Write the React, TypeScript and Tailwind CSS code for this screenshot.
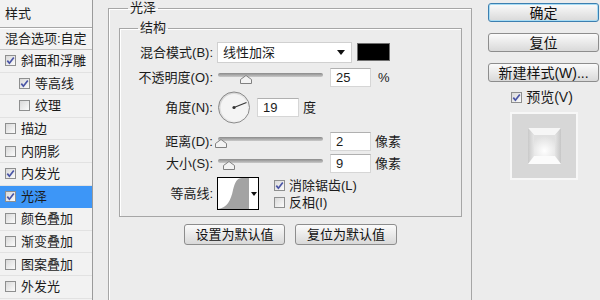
import React from "react";

type Layer = { name: string; checked?: boolean; indent?: boolean; active?: boolean };

const layers: Layer[] = [
  { name: "斜面和浮雕", checked: true },
  { name: "等高线", checked: true, indent: true },
  { name: "纹理", indent: true },
  { name: "描边" },
  { name: "内阴影" },
  { name: "内发光", checked: true },
  { name: "光泽", checked: true, active: true },
  { name: "颜色叠加" },
  { name: "渐变叠加" },
  { name: "图案叠加" },
  { name: "外发光" },
];

function Check({ checked }: { checked?: boolean }) {
  return (
    <span className="flex h-[11px] w-[11px] shrink-0 items-center justify-center border border-[#8e8f8f] bg-linear-to-br from-[#d9d9d9] to-[#fbfbfb]">
      {checked && (
        <svg width="9" height="9" viewBox="0 0 9 9">
          <path d="M1.3 4.6 L3.4 7.2 L7.8 1.4" fill="none" stroke="#4a55a6" strokeWidth="1.7" />
        </svg>
      )}
    </span>
  );
}

function Btn({ label, primary, className }: { label: string; primary?: boolean; className: string }) {
  return (
    <div
      className={
        "flex items-center justify-center rounded-[3px] border bg-linear-to-b from-[#fbfbfb] to-[#d9d9d9] leading-none text-[#111] " +
        (primary ? "border-[#3c7fb0] shadow-[inset_0_0_0_1px_#a8dcf4] " : "border-[#8d8d8d] ") +
        className
      }
    >
      {label}
    </div>
  );
}

function Slider({ thumb }: { thumb: string }) {
  return (
    <div className="relative h-[22px] w-[106px] shrink-0">
      <div className="absolute left-[1px] right-0 top-[7px] h-[4px] rounded-full bg-linear-to-b from-[#8a8a8a] to-[#cacaca]" />
      <svg className={"absolute top-[9px] " + thumb} width="12" height="9" viewBox="0 0 12 9">
        <path d="M6 0.5 L11.5 4.5 L11.5 8.5 L0.5 8.5 L0.5 4.5 Z" fill="#f3f3f3" stroke="#808080" />
      </svg>
    </div>
  );
}

function NumBox({ value, w }: { value: string; w: string }) {
  return (
    <div className={"flex h-[19px] shrink-0 items-center border border-[#d6d6d6] border-t-[#b0b0b0] bg-white pl-[5px] leading-none " + w}>
      {value}
    </div>
  );
}

function Label({ text }: { text: string }) {
  return <div className="w-[93px] shrink-0 text-right leading-none">{text}</div>;
}

export default function App() {
  return (
    <div className="flex h-[300px] w-[600px] overflow-hidden bg-[#ececec] font-['Liberation_Sans','Noto_Sans_CJK_SC',sans-serif] text-[13px] text-[#1b1b1b]">
      {/* style list */}
      <div className="flex w-[93px] shrink-0 flex-col border-r border-[#9a9a9a] bg-[#f2f2f2]">
        <div className="flex h-[28px] shrink-0 items-center border-b border-[#a8a8a8] pl-[5px] leading-none shadow-[0_1px_0_#fff]">
          样式
        </div>
        <div className="flex h-[22px] shrink-0 items-center border-b border-[#c4c4c4] pl-[5px] leading-none">
          混合选项:自定
        </div>
        {layers.map((l) => (
          <div
            key={l.name}
            className={
              "flex h-[22.6px] shrink-0 items-center gap-[5px] border-b leading-none " +
              (l.indent ? "pl-[19px] " : "pl-[5px] ") +
              (l.active ? "border-[#3d96f7] bg-[#3d96f7]" : "border-[#e2e2e2]")
            }
          >
            <Check checked={l.checked} />
            <span>{l.name}</span>
          </div>
        ))}
      </div>

      {/* main group */}
      <fieldset className="ml-[15px] h-[330px] w-[364px] shrink-0 border border-[#a6a6a6] pl-[10px] pr-[9px] pt-[4px] shadow-[inset_1px_1px_0_#fff]">
        <legend className="ml-[9px] px-[2px] leading-[16px]">光泽</legend>

        <fieldset className="w-full border border-[#a6a6a6] pb-[6px] shadow-[inset_1px_1px_0_#fff]">
          <legend className="ml-[18px] px-[2px] leading-[16px]">结构</legend>

          {/* blend mode */}
          <div className="mt-[5px] flex h-[22px] items-center">
            <Label text="混合模式(B):" />
            <div className="ml-[4px] flex h-[21px] w-[135px] items-center justify-between border border-[#d0d0d0] bg-white pl-[5px] pr-[6px] leading-none">
              <span>线性加深</span>
              <svg width="8" height="5" viewBox="0 0 8 5">
                <path d="M0 0 L8 0 L4 5 Z" fill="#111" />
              </svg>
            </div>
            <div className="ml-[5px] h-[18px] w-[33px] border border-[#6f6f6f] bg-black" />
          </div>

          {/* opacity */}
          <div className="mt-[3px] flex h-[22px] items-center">
            <Label text="不透明度(O):" />
            <div className="ml-[4px] flex items-center">
              <Slider thumb="left-[23px]" />
              <div className="ml-[7px]">
                <NumBox value="25" w="w-[41px]" />
              </div>
              <span className="ml-[7px] leading-none">%</span>
            </div>
          </div>

          {/* angle */}
          <div className="mt-[3px] flex h-[32px] items-center">
            <Label text="角度(N):" />
            <svg className="ml-[4px] shrink-0" width="34" height="33" viewBox="0 0 34 33">
              <defs>
                <linearGradient id="dial" x1="0" y1="0" x2="1" y2="1">
                  <stop offset="0" stopColor="#cdcdcd" />
                  <stop offset="1" stopColor="#fbfbfb" />
                </linearGradient>
              </defs>
              <circle cx="17" cy="16.5" r="15.5" fill="url(#dial)" stroke="#8a8a8a" />
              <circle cx="17" cy="16.5" r="13.5" fill="#f4f4f4" />
              <line x1="17" y1="16.5" x2="29.5" y2="11.5" stroke="#3a3a3a" strokeWidth="1.3" />
              <circle cx="17" cy="16.5" r="1.6" fill="#333" />
            </svg>
            <div className="ml-[6px]">
              <NumBox value="19" w="w-[42px]" />
            </div>
            <span className="ml-[4px] leading-none">度</span>
          </div>

          {/* distance */}
          <div className="mt-[7px] flex h-[22px] items-center">
            <Label text="距离(D):" />
            <div className="ml-[4px] flex items-center">
              <Slider thumb="-left-[2px]" />
              <div className="ml-[7px]">
                <NumBox value="2" w="w-[41px]" />
              </div>
              <span className="ml-[4px] leading-none">像素</span>
            </div>
          </div>

          {/* size */}
          <div className="flex h-[22px] items-center">
            <Label text="大小(S):" />
            <div className="ml-[4px] flex items-center">
              <Slider thumb="left-[6px]" />
              <div className="ml-[7px]">
                <NumBox value="9" w="w-[41px]" />
              </div>
              <span className="ml-[4px] leading-none">像素</span>
            </div>
          </div>

          {/* contour */}
          <div className="mt-[3px] flex h-[33px] items-center">
            <Label text="等高线:" />
            <div className="ml-[4px] flex h-[33px] w-[42px] shrink-0 border border-black bg-white">
              <svg width="31" height="31" viewBox="0 0 31 31">
                <path d="M0 31 C 9 30, 13 22, 15 12 C 17 4, 19 0, 24 0 L31 0 L31 31 Z" fill="#a3a3a3" />
              </svg>
              <div className="flex flex-1 items-center justify-center">
                <svg width="6" height="4" viewBox="0 0 6 4">
                  <path d="M0 0 L6 0 L3 4 Z" fill="#111" />
                </svg>
              </div>
            </div>
            <div className="ml-[15px] flex flex-col">
              <div className="flex h-[17px] items-center gap-[4px] leading-none">
                <Check checked />
                <span>消除锯齿(L)</span>
              </div>
              <div className="flex h-[17px] items-center gap-[4px] leading-none">
                <Check />
                <span>反相(I)</span>
              </div>
            </div>
          </div>
        </fieldset>

        <div className="mt-[7px] flex justify-center gap-[10px]">
          <Btn label="设置为默认值" className="h-[21px] w-[101px]" />
          <Btn label="复位为默认值" className="h-[21px] w-[102px]" />
        </div>
      </fieldset>

      {/* right column */}
      <div className="ml-[16px] flex w-[112px] shrink-0 flex-col text-[14px]">
        <Btn label="确定" primary className="mt-[3px] h-[19px] w-[111px]" />
        <Btn label="复位" className="mt-[11px] h-[19px] w-[111px]" />
        <Btn label="新建样式(W)..." className="mt-[11px] h-[19px] w-[111px]" />
        <div className="mt-[8px] flex h-[14px] items-center justify-center gap-[4px] pr-[4px] leading-none">
          <Check checked />
          <span>预览(V)</span>
        </div>
        <div className="mx-auto mt-[8px] flex h-[68px] w-[68px] items-center justify-center border-2 border-[#f7f7f7] bg-[#d7d7d7]">
          <svg width="33" height="36" viewBox="0 0 33 36">
            <defs>
              <radialGradient id="face" cx="0.5" cy="0.75" r="0.7">
                <stop offset="0" stopColor="#ffffff" />
                <stop offset="1" stopColor="#e0e0e0" />
              </radialGradient>
              <linearGradient id="lside" x1="0" y1="0" x2="1" y2="0">
                <stop offset="0" stopColor="#c9c9c9" />
                <stop offset="1" stopColor="#e6e6e6" />
              </linearGradient>
              <linearGradient id="rside" x1="1" y1="0" x2="0" y2="0">
                <stop offset="0" stopColor="#c6c6c6" />
                <stop offset="1" stopColor="#e4e4e4" />
              </linearGradient>
            </defs>
            <polygon points="0,0 33,0 27,7 6,7" fill="#f6f6f6" />
            <polygon points="0,0 6,7 6,28 0,36" fill="url(#lside)" />
            <polygon points="33,0 27,7 27,28 33,36" fill="url(#rside)" />
            <polygon points="0,36 6,28 27,28 33,36" fill="#fbfbfb" />
            <rect x="6" y="7" width="21" height="21" fill="url(#face)" />
          </svg>
        </div>
      </div>
    </div>
  );
}
